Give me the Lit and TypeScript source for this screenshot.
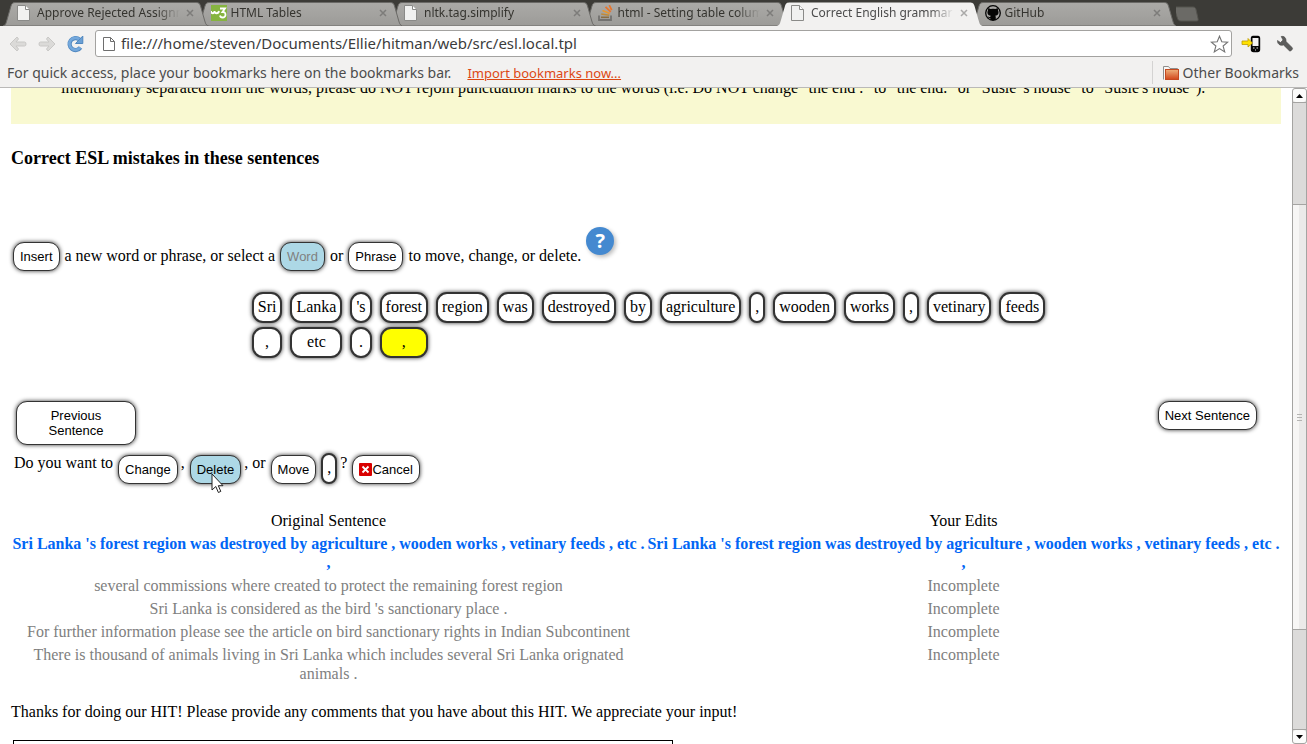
import { LitElement, html, css, svg, nothing } from "lit";
import { customElement, property } from "lit/decorators.js";

const pageIcon = svg`
  <path d="M.5 .5h8l4 4v11H.5z" fill="#f1f1f0" stroke="#8a8a88"/>
  <path d="M8.500 .5v4h4" fill="#fff" stroke="#8a8a88"/>`;
const w3Icon = svg`
  <rect width="16" height="16" fill="#86b440"/>
  <path d="M0 6c0 3 3.500 3 3.500 0 0 3 4 3 4.500 0" fill="none" stroke="#fff" stroke-width="1.800"/>
  <path d="M9 3.500h5L11.500 7c4-.3 4 5.500 0 5.500-1.500 0-2.300-1-2.500-2" fill="none" stroke="#fff" stroke-width="1.800"/>`;
const stackIcon = svg`
  <path d="M1 10.500V15h12v-4.500" fill="none" stroke="#737270" stroke-width="1.800"/>
  <path d="M3 12.300h8" stroke="#8a6d42" stroke-width="1.500"/>
  <path d="M3.200 9l8 1.200" stroke="#c08a3a" stroke-width="1.600"/>
  <path d="M4.500 5.500l7.200 3" stroke="#e8962d" stroke-width="1.700"/>
  <path d="M7.500 1.800l5.200 5M11.300 .2l2.400 5" stroke="#e9742a" stroke-width="1.700"/>`;
const githubIcon = svg`
  <circle cx="8" cy="8" r="7.300" fill="#a9a8a6" stroke="#050505" stroke-width="1.300"/>
  <path d="M3.300 3l2.200 1.100a9 9 0 0 1 5 0L12.700 3l.4 2.500c1.200 2.500 0 5-2.900 5.300.7.700.6 1.500.6 4.200H5.300v-2c-1.700.2-2.300-.5-2.800-1.700 1.100.2 1.400 1 2.800.7 0-.5.200-.900.500-1.200C2.900 10.500 1.700 8 2.900 5.500z" fill="#050505"/>`;

const TABS = [
  { title: "Approve Rejected Assignments", icon: pageIcon },
  { title: "HTML Tables", icon: w3Icon },
  { title: "nltk.tag.simplify", icon: pageIcon },
  { title: "html - Setting table column width", icon: stackIcon },
  { title: "Correct English grammar and usage", icon: pageIcon, active: true },
  { title: "GitHub", icon: githubIcon },
];

const WORDS = ["Sri", "Lanka", "'s", "forest", "region", "was", "destroyed", "by", "agriculture", ",",
  "wooden", "works", ",", "vetinary", "feeds", ",", "etc", ".", ","];

const SENTENCE = "Sri Lanka 's forest region was destroyed by agriculture , wooden works , vetinary feeds , etc . ,";
const ROWS = [
  "several commissions where created to protect the remaining forest region",
  "Sri Lanka is considered as the bird 's sanctionary place .",
  "For further information please see the article on bird sanctionary rights in Indian Subcontinent",
  "There is thousand of animals living in Sri Lanka which includes several Sri Lanka orignated animals .",
];

@customElement("browser-tab")
class BrowserTab extends LitElement {
  @property() label = "";
  @property({ type: Boolean, reflect: true }) active = false;
  @property({ attribute: false }) icon: unknown = nothing;

  static styles = css`
    :host { display: block; position: relative; flex: 1 1 0; min-width: 0; margin-right: -12px; height: 24px; }
    .shape { position: absolute; inset: 0; width: 100%; height: 100%; }
    .row { position: relative; display: flex; align-items: center; height: 22px; padding: 0 13px 0 14px; }
    .icon { flex: none; width: 16px; height: 16px; }
    .title { flex: 1; min-width: 0; margin: 0 4px; overflow: hidden; white-space: nowrap;
      font: 12px/18px "Noto Sans", sans-serif; color: #35342f; text-align: left;
      mask-image: linear-gradient(to right, #000 calc(100% - 24px), transparent); }
    :host([active]) .title { color: #4c4c4c; }
    .close { flex: none; width: 12px; height: 12px; padding: 0; border: 0; background: none; display: flex; align-items: center; justify-content: center; }
  `;

  render() {
    return html`
      <svg class="shape" viewBox="0 0 206 24" preserveAspectRatio="none" aria-hidden="true">
        <defs><linearGradient id="g" x1="0" y1="0" x2="0" y2="1"><stop offset="0" stop-color="#abaaa7"/><stop offset="1" stop-color="#9c9b98"/></linearGradient></defs>
        <path d="M0 24C3 23 3 21 4 18L8 4C9 1 10 .5 13 .5H193C196 .5 197 1 198 4L202 18C203 21 203 23 206 24Z"
          fill=${this.active ? "#f2f1f0" : "url(#g)"} stroke=${this.active ? "none" : "#6a6966"}/>
      </svg>
      <div class="row">
        <svg class="icon" viewBox="0 0 16 16" aria-hidden="true">${this.icon}</svg>
        <span class="title">${this.label}</span>
        <button class="close" aria-label="Close tab">
          <svg width="8" height="8" viewBox="0 0 8 8"><path d="M1 1l6 6M7 1l-6 6" stroke=${this.active ? "#aaa9a8" : "#7d7c7a"} stroke-width="1.500"/></svg>
        </button>
      </div>`;
  }
}

@customElement("browser-chrome")
class BrowserChrome extends LitElement {
  static styles = css`
    :host { display: block; flex: none; background: #f2f1f0; border-bottom: 1px solid #bab9b8; font-family: "Noto Sans", sans-serif; color: #4c4c4c; }
    button { border: 0; padding: 0; background: none; display: flex; }
    .strip { display: flex; height: 26px; box-sizing: border-box; padding: 2px 0 0 3px; background: #3c3b37; }
    .tabs { flex: 1; min-width: 0; display: flex; padding-right: 12px; isolation: isolate; }
    .t0 { z-index: 6; } .t1 { z-index: 5; } .t2 { z-index: 4; } .t3 { z-index: 3; } .t4 { z-index: 7; } .t5 { z-index: 1; }
    .new { width: 131px; padding-top: 4px; }
    .toolbar { display: flex; align-items: center; height: 35px; padding: 0 13px 0 9px; }
    .back { margin-right: 11px; }
    .forward { margin-right: 11px; }
    .address { flex: 1; display: flex; align-items: center; box-sizing: border-box; height: 27px; margin: 0 9px 0 11px; padding: 0 2px 0 7px; background: #fff; border: 1px solid #a3a2a0; border-radius: 3px; }
    .address input { flex: 1; min-width: 0; border: 0; outline: 0; padding: 0 0 1px; margin-left: 6px; background: none; font: 15px/20px "Noto Sans", sans-serif; color: #3c3c3c; }
    .wrench { margin-left: 15px; }
    .bookmarks { display: flex; align-items: center; box-sizing: border-box; height: 26px; padding: 0 8px 3px 7px; font-size: 14px; line-height: 20px; white-space: nowrap; }
    .bookmarks a { margin-left: 16px; font-size: 13px; color: #dd4814; }
    .other { display: flex; align-items: center; gap: 4px; margin-left: auto; height: 23px; padding-left: 10px; border-left: 1px solid #d4d3d2; font: inherit; color: inherit; }
  `;

  render() {
    return html`
      <div class="strip">
        <div class="tabs">
          ${TABS.map((t, i) => html`<browser-tab class="t${i}" .label=${t.title} .icon=${t.icon} ?active=${!!t.active}></browser-tab>`)}
        </div>
        <button class="new" aria-label="New tab">
          <svg width="26" height="16" viewBox="3 0 26 16"><path d="M3 1h17c2 0 2.500 1 3 2.500l2 9c.5 2 0 2.500-2 2.500H8c-2 0-3-1-3.500-2.500L1.500 3c-.5-1.500 0-2 1.500-2z" fill="#6b6a66" stroke="#55544f"/></svg>
        </button>
      </div>
      <div class="toolbar">
        <button class="back" aria-label="Back"><svg width="18" height="16" viewBox="0 0 18 16"><path d="M1 8l7-7 1.500 2-2.500 3h8.500q1.500 0 1.500 2t-1.500 2H7l2.500 3L8 15z" fill="#dbdad8" stroke="#c9c8c6"/></svg></button>
        <button class="forward" aria-label="Forward"><svg width="18" height="16" viewBox="0 0 18 16"><path d="M17 8l-7-7-1.500 2 2.500 3H2.500Q1 6 1 8t1.500 2H11l-2.500 3L10 15z" fill="#dbdad8" stroke="#c9c8c6"/></svg></button>
        <button aria-label="Reload"><svg width="17" height="18" viewBox="0 0 17 18"><path d="M13.500 12.500A6 6 0 1 1 12.500 4.500" fill="none" stroke="#4f87bf" stroke-width="4.200"/><path d="M13.200 12.500A6 6 0 1 1 12.500 4.500" fill="none" stroke="#74a8dc" stroke-width="2.600"/><path d="M15.800 1v7.500H8.500z" fill="#6a9fd4" stroke="#4f87bf"/></svg></button>
        <div class="address">
          <svg width="12" height="16" viewBox="0 0 12 16"><path d="M.5 1.500h7l4 4v9H.5z" fill="#fff" stroke="#6e6e6e"/><path d="M7.500 1.500v4h4" fill="none" stroke="#6e6e6e"/></svg>
          <input aria-label="Address" value="file:///home/steven/Documents/Ellie/hitman/web/src/esl.local.tpl">
          <button aria-label="Bookmark this page"><svg width="19" height="18" viewBox="0 0 19 18"><path d="M9.500 1.200l2.300 5.600 5.900.4-4.600 3.800 1.600 5.900-5.200-3.300-5.200 3.300 1.600-5.900L1.300 7.200l5.900-.4z" fill="#fff" stroke="#737373" stroke-width="1.100"/></svg></button>
        </div>
        <button aria-label="Send to phone"><svg width="20" height="18" viewBox="0 0 20 18"><path d="M12 1.500h5q1.500 0 1.500 2v11q0 2-2 2h-4q-2 0-2-2v-11q0-2 1.500-2z" fill="#050505" stroke="#050505" stroke-width="1.400"/><rect x="11.500" y="3" width="6" height="8" fill="#f4f3f2"/><path d="M12 13h1.500M15.500 13H17M14 15h1" stroke="#ddd"/><path d="M1 6h6V3.500L11.500 8 7 12V9.500H1z" fill="#ffe100" stroke="#bf9d00" stroke-width=".8"/></svg></button>
        <button class="wrench" aria-label="Settings"><svg width="18" height="18" viewBox="0 0 18 18"><path d="M5.200 1.500C8 .8 10.500 3 10 6.500l6.300 6.200c1 1-1.600 4.300-3 3L7.500 10C4 11.200 1 8.500 1.500 5.500L4.500 7.500 7 5z" fill="#5d5d5c" stroke="#4b4b4a" stroke-width=".6"/></svg></button>
      </div>
      <div class="bookmarks">
        <span>For quick access, place your bookmarks here on the bookmarks bar.</span>
        <a href="#">Import bookmarks now...</a>
        <button class="other">
          <svg width="16" height="16" viewBox="0 0 16 16"><defs><linearGradient id="f" x1="0" y1="0" x2="0" y2="1"><stop offset="0" stop-color="#eeb07a"/><stop offset="1" stop-color="#d2461a"/></linearGradient></defs><path d="M.5 14.500V1.500h5l1.500 2h7.500V6" fill="#f7f6f5" stroke="#8f8e8c"/><rect x="2.500" y="4.500" width="13" height="10" fill="url(#f)" stroke="#c4491f"/></svg>
          <span>Other Bookmarks</span>
        </button>
      </div>`;
  }
}

@customElement("app-root")
class AppRoot extends LitElement {
  static styles = css`
    :host { display: flex; flex-direction: column; height: 100vh; overflow: hidden; background: #fff; color: #000; font: 16px/19px "Liberation Serif", serif; }
    .window { flex: 1; min-height: 0; display: flex; }
    .page { flex: 1; min-width: 0; overflow: hidden; padding: 0 11px; }
    .note { margin: -10px 0 0; padding: 0 50px 27px; background: #f9f9d1; white-space: nowrap; }
    h3 { margin: 23px 0 58px; font-size: 18px; line-height: 22px; }
    .btn { position: relative; box-sizing: border-box; border: 1px solid #333; border-radius: 11px; padding: 6px; background: #fff; color: #000; font: 13px/15px "Liberation Sans", sans-serif; box-shadow: 0 0 4px #333; }
    .btn.picked { background: #add8e6; }
    .btn:disabled { color: #808080; }
    .chip { box-sizing: border-box; border: 2px solid #333; border-radius: 11px; padding: 3px 4px 5px; background: #fff; color: #000; font: inherit; box-shadow: 0 0 4px #333; }
    .chip.marked { background: #ff0; }
    .tools { display: flex; align-items: flex-end; gap: 5px; height: 44px; padding-left: 2px; }
    .tools span { padding-bottom: 6px; }
    .help { align-self: flex-start; width: 28px; height: 28px; padding: 0; border: 0; border-radius: 50%; background: #4489d0; color: #fff; font: bold 20px/28px "Open Sans", sans-serif; box-shadow: 2px 2px 4px #bbb; }
    .words { display: grid; grid-template-columns: repeat(15, auto); justify-content: center; gap: 4px 8px; margin-top: 21px; padding-left: 5px; }
    .nav { display: flex; justify-content: space-between; align-items: flex-start; margin-top: 43px; padding: 0 24px 0 5px; }
    .prev { width: 120px; padding: 6px 24px; }
    .ask { display: flex; align-items: flex-start; gap: 5px; margin-top: 8px; padding-left: 3px; }
    .group { display: flex; align-items: flex-start; gap: 3px; }
    .ask .btn { margin-top: 2px; }
    .cancel { display: flex; align-items: center; }
    .pointer { position: absolute; left: 20px; top: 17px; }
    .edits { width: 100%; margin-top: 24px; border-spacing: 0 2px; table-layout: fixed; text-align: center; }
    .edits th, .edits td { padding: 1px 0; vertical-align: top; font-weight: normal; color: #808080; }
    .edits th { color: #000; }
    .edits .current td { font-weight: bold; color: #0066f5; }
    .thanks { display: block; margin: 16px 0 19px; }
    textarea { display: block; box-sizing: border-box; width: 660px; height: 90px; margin-left: 2px; border: 1px solid #000; border-radius: 0; resize: none; outline: 0; }
    .scroll { flex: none; width: 15px; box-sizing: border-box; display: flex; flex-direction: column; background: #dcdbda; border: 1px solid #a5a4a2; border-radius: 3px; }
    .scroll button { flex: none; height: 13px; padding: 0; border: 0; background: #fcfcfb; display: flex; align-items: center; justify-content: center; border-radius: 3px; }
    .before { flex: 101; border-top: 1px solid #a5a4a2; }
    .after { flex: 99; border-bottom: 1px solid #a5a4a2; }
    .thumb { flex: 425; display: flex; align-items: center; justify-content: center; border: solid #a5a4a2; border-width: 1px 0; background: linear-gradient(to right, #f7f6f5 50%, #ebeae9 50%); }
  `;

  render() {
    return html`
      <browser-chrome></browser-chrome>
      <div class="window">
        <main class="page">
          <p class="note">intentionally separated from the words, please do NOT rejoin punctuation marks to the words (i.e. Do NOT change "the end ." to "the end." or "Susie 's house" to "Susie's house").</p>
          <h3>Correct ESL mistakes in these sentences</h3>
          <div class="tools">
            <button class="btn">Insert</button>
            <span>a new word or phrase, or select a</span>
            <button class="btn picked" disabled>Word</button>
            <span>or</span>
            <button class="btn">Phrase</button>
            <span>to move, change, or delete.</span>
            <button class="help" aria-label="Help">?</button>
          </div>
          <div class="words">
            ${WORDS.map((w, i) => html`<button class="chip ${i === WORDS.length - 1 ? "marked" : ""}">${w}</button>`)}
          </div>
          <div class="nav">
            <button class="btn prev">Previous Sentence</button>
            <button class="btn">Next Sentence</button>
          </div>
          <div class="ask">
            <span>Do you want to</span>
            <span class="group"><button class="btn">Change</button>,</span>
            <span class="group"><button class="btn picked">Delete
              <svg class="pointer" width="14" height="21" viewBox="0 0 14 21" aria-hidden="true"><path d="M1 1v16l3.800-3.500 2.600 6 2.400-1.100-2.500-5.700H12z" fill="#fff" stroke="#222"/></svg></button>, or</span>
            <button class="btn">Move</button>
            <span class="group"><button class="chip">,</button>?</span>
            <button class="btn cancel"><svg width="13" height="13" viewBox="0 0 13 13" aria-hidden="true"><rect width="13" height="13" rx="1" fill="#d90000"/><path d="M3.500 3.500l6 6M9.500 3.500l-6 6" stroke="#fff" stroke-width="1.800"/></svg>Cancel</button>
          </div>
          <table class="edits">
            <thead><tr><th>Original Sentence</th><th>Your Edits</th></tr></thead>
            <tbody>
              <tr class="current"><td>${SENTENCE}</td><td>${SENTENCE}</td></tr>
              ${ROWS.map((r) => html`<tr><td>${r}</td><td>Incomplete</td></tr>`)}
            </tbody>
          </table>
          <label class="thanks" for="comments">Thanks for doing our HIT! Please provide any comments that you have about this HIT. We appreciate your input!</label>
          <textarea id="comments"></textarea>
        </main>
        <div class="scroll">
          <button aria-label="Scroll up"><svg width="7" height="4" viewBox="0 0 7 4"><path d="M0 4L3.500 0 7 4z"/></svg></button>
          <div class="before"></div>
          <div class="thumb"><svg width="5" height="7" viewBox="0 0 5 7"><path d="M0 .5h5M0 3.500h5M0 6.500h5" stroke="#b5b4b2"/></svg></div>
          <div class="after"></div>
          <button aria-label="Scroll down"><svg width="7" height="4" viewBox="0 0 7 4"><path d="M0 0L3.500 4 7 0z"/></svg></button>
        </div>
      </div>`;
  }
}
